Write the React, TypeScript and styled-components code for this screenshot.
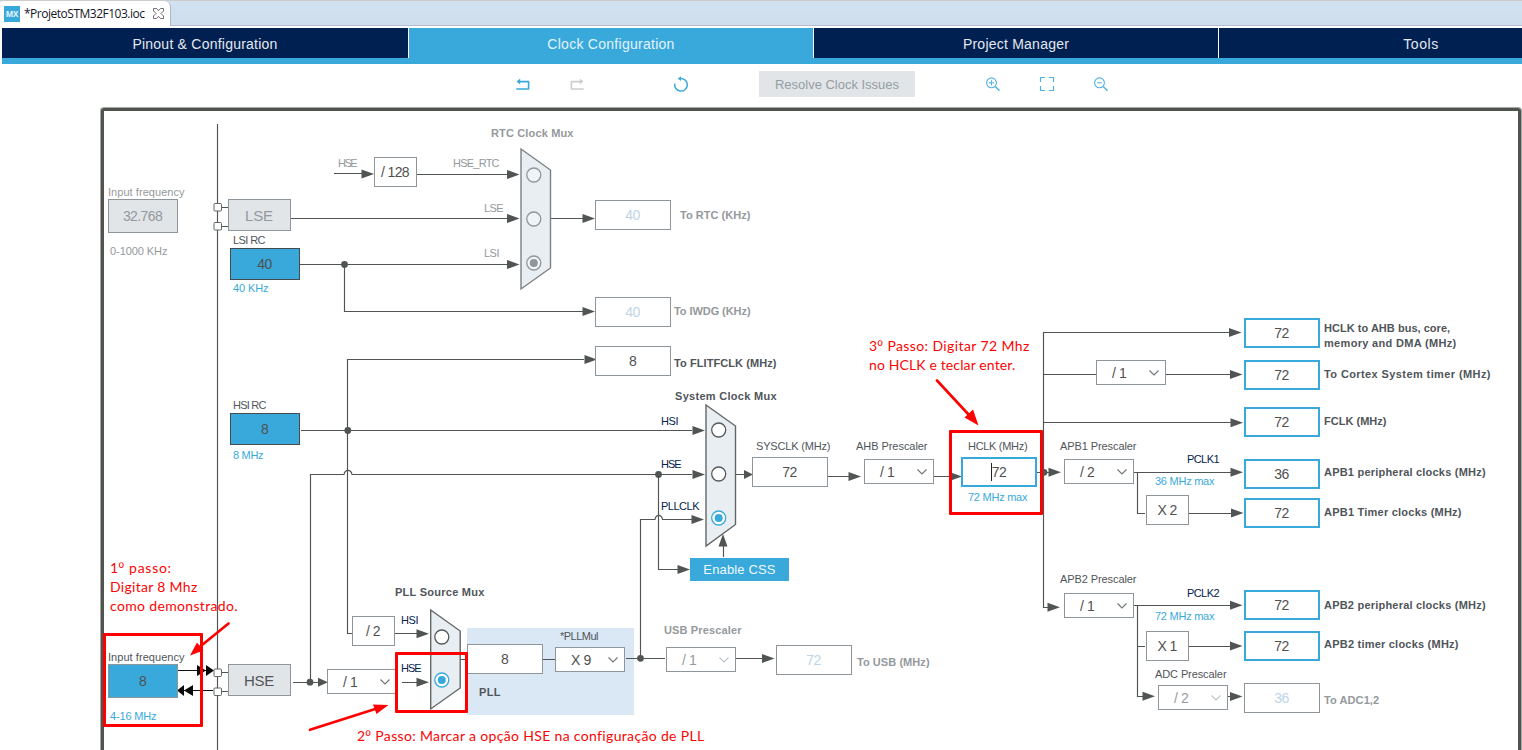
import React from "react";
import styled, { createGlobalStyle } from "styled-components";

const SANS = '"Liberation Sans", Arial, sans-serif';
const NOTE = 'Lato, Calibri, sans-serif';
const BLUE = "#39a9dc";
const NAVY = "#03234b";
const INK = "#50555a";
const MUTED = "#8f969b";
const WIRE = "#505554";

const GlobalStyle = createGlobalStyle`
  html, body { margin: 0; padding: 0; background: #fff; overflow: hidden; }
  * { box-sizing: border-box; }
`;

const Page = styled.div`
  display: flex;
  flex-direction: column;
  width: 1522px;
  height: 750px;
  overflow: hidden;
  background: #fff;
  font-family: ${SANS};
`;

/* ---------- editor tab strip ---------- */

const TabStrip = styled.div`
  display: flex;
  flex: none;
  height: 26px;
  background: linear-gradient(#d2e1f0, #cfdeed);
  border-top: 1px solid #cbcbcb;
  border-bottom: 1px solid #b5bccf;
`;

const EditorTab = styled.div`
  display: flex;
  align-items: center;
  width: 171px;
  height: 25px;
  padding-left: 4px;
  background: #fff;
  border-right: 1px solid #b0b5cf;
  border-radius: 3px 6px 0 0;
`;

const MxBadge = styled.div`
  width: 16px;
  height: 16px;
  background: ${BLUE};
  color: #e8f6fd;
  font: 700 8px/15px "Open Sans", sans-serif;
  letter-spacing: -0.2px;
  text-align: center;
`;

const FileName = styled.div`
  width: 133px;
  padding-left: 4px;
  color: #15151f;
  font: 12px/16px "Open Sans", "Noto Sans", sans-serif;
  white-space: nowrap;
`;

/* ---------- main navigation ---------- */

const Nav = styled.nav`
  display: flex;
  flex: none;
  gap: 1px;
  height: 36px;
  margin: 2px 0 0 2px;
  background: #fff;
  border-bottom: 6px solid ${BLUE};
  overflow: hidden;
`;

const NavItem = styled.div<{ $active?: boolean; $width: number }>`
  flex: 0 0 ${(p) => p.$width}px;
  height: 30px;
  background: ${(p) => (p.$active ? BLUE : "#002052")};
  color: ${(p) => (p.$active ? "#e3f3fb" : "#e4e8ee")};
  font-size: 14px;
  line-height: 32px;
  text-align: center;
`;

/* ---------- toolbar ---------- */

const Toolbar = styled.div`
  display: flex;
  flex: none;
  align-items: center;
  height: 43px;
  padding: 0 0 3px 515px;
`;

const HistoryTools = styled.div`
  display: flex;
  gap: 38px;
  margin-right: 88px;
`;

const ZoomTools = styled.div`
  display: flex;
  gap: 38px;
  margin-left: 70px;
`;

const IconButton = styled.div`
  display: flex;
  flex: none;
  width: 16px;
  height: 16px;
`;

const ResolveButton = styled.div`
  flex: none;
  width: 156px;
  height: 26px;
  margin-left: 70px;
  background: #e1e5e8;
  color: #969da3;
  font-size: 13px;
  line-height: 27px;
  text-align: center;
`;

/* ---------- diagram canvas ---------- */

const ORIGIN = { x: 104, y: 111 };

const Canvas = styled.div`
  position: relative;
  flex: none;
  width: 1420px;
  height: 660px;
  margin-left: 101px;
  margin-top: 1px;
  border: 3px solid #50544f;
  border-radius: 3px 3px 0 0;
  box-shadow: 0 0 0 1px #a3a7a6;
`;

const Layer = styled.svg`
  position: absolute;
  left: 0;
  top: 0;
  display: block;
  pointer-events: none;
`;

const Placed = styled.div<{ $x: number; $y: number; $w?: number; $h?: number }>`
  position: absolute;
  left: ${(p) => p.$x - ORIGIN.x}px;
  top: ${(p) => p.$y - ORIGIN.y}px;
  ${(p) => p.$w !== undefined && `width: ${p.$w}px;`}
  ${(p) => p.$h !== undefined && `height: ${p.$h}px;`}
`;

type Tone = "dark" | "muted" | "pale" | "blue" | "navy" | "note";
const toneColor: Record<Tone, string> = {
  dark: INK,
  muted: "#94999c",
  pale: "#bdd5e7",
  blue: BLUE,
  navy: NAVY,
  note: "#fb0404",
};

const LabelText = styled(Placed)<{ $tone: Tone; $bold?: boolean; $note?: boolean }>`
  color: ${(p) => toneColor[p.$tone]};
  font-family: ${(p) => (p.$note ? NOTE : SANS)};
  font-size: ${(p) => (p.$note ? 14 : 11)}px;
  font-weight: ${(p) => (p.$bold ? 700 : 400)};
  line-height: 16px;
  white-space: pre;
`;

/* Masculine ordinal with the underlined o. */
const Ordinal = styled.span`
  display: inline-block;
  height: 9px;
  border-bottom: 1px solid currentColor;
  line-height: 16px;
  vertical-align: 4px;
  letter-spacing: 0;
  font-size: 13px;
  & > span { position: relative; top: -1px; }
`;

const pen = document.createElement("canvas").getContext("2d");

/* Letter spacing that spreads a text over a given width. */
function tracking(text: string, font: string, width: number) {
  if (!pen) return 0;
  pen.font = font;
  return (width - pen.measureText(text).width) / Math.max(1, text.length - 1);
}

type LabelProps = { t: string; x: number; to: number; y: number; tone?: Tone; bold?: boolean };

function Label({ t, x, to, y, tone = "dark", bold }: LabelProps) {
  const note = tone === "note";
  const font = `${bold ? 700 : 400} ${note ? 14 : 11}px ${note ? NOTE : SANS}`;
  const [head, tail] = t.split("º");
  return (
    <LabelText
      $x={x}
      $y={y - 8}
      $tone={tone}
      $bold={bold}
      $note={note}
      style={{ letterSpacing: `${tracking(t, font, to - x + 0.5).toFixed(2)}px` }}
    >
      {tail === undefined ? t : <>{head}<OrdinalMark />{tail}</>}
    </LabelText>
  );
}

const OrdinalFont = styled.span`
  font-family: ${SANS};
  letter-spacing: 0.8px;
`;

function OrdinalMark() {
  return <OrdinalFont>º</OrdinalFont>;
}

const ValueBox = styled(Placed)<{ $kind: "plain" | "pale" | "live" | "source" | "input" | "off" }>`
  border: ${(p) => (p.$kind === "live" ? `2px solid ${BLUE}` : `1px solid ${p.$kind === "source" ? "#464b4f" : MUTED}`)};
  background: ${(p) =>
    p.$kind === "off" ? "#e1e5e8" : p.$kind === "source" || p.$kind === "input" ? BLUE : "#fff"};
  color: ${(p) => (p.$kind === "pale" ? "#bdd5e7" : p.$kind === "off" ? "#93999e" : "#50504f")};
  display: flex;
  align-items: center;
  justify-content: center;
  padding-right: 1px;
  font-size: 14px;
  letter-spacing: -0.6px;
  white-space: pre;
`;

const Oscillator = styled(ValueBox)<{ $dim?: boolean }>`
  font-size: 15px;
  letter-spacing: -0.2px;
  color: ${(p) => (p.$dim ? "#93999e" : "#50555a")};
`;

const Combo = styled(Placed)<{ $dim?: boolean }>`
  display: flex;
  align-items: center;
  justify-content: space-between;
  padding: 0 5px 0 15px;
  border: 1px solid ${MUTED};
  background: #fff;
  color: ${(p) => (p.$dim ? "#969b9e" : "#50504f")};
  font-size: 14px;
  letter-spacing: -0.4px;
  white-space: pre;
`;

const PllPanel = styled(Placed)`
  background: #dae8f6;
`;

const CssButton = styled(Placed)`
  background: ${BLUE};
  color: #eef8fd;
  font-size: 13px;
  line-height: 24px;
  letter-spacing: 0.15px;
  text-align: center;
`;

const Caret = styled.span`
  width: 1px;
  height: 18px;
  background: #222;
`;

const Highlight = styled(Placed)`
  border: 3px solid #fe0000;
  border-radius: 1px;
`;

function Select({ x, y, t, dim }: { x: number; y: number; t: string; dim?: boolean }) {
  return (
    <Combo $x={x} $y={y} $w={70} $h={25} $dim={dim}>
      {t}
      <svg width="12" height="8" viewBox="0 0 12 8">
        <path d="M1.5 1.5 6 6l4.500-4.500" fill="none" stroke={dim ? "#bfc3c5" : "#6f7477"} strokeWidth="1.100" />
      </svg>
    </Combo>
  );
}

function Wire({ d, color = WIRE }: { d: string; color?: string }) {
  return <path d={d} fill="none" stroke={color} strokeWidth="1.150" />;
}

/* Arrow head with its tip at (x, y), pointing right. */
function Head({ x, y }: { x: number; y: number }) {
  return <path d={`M${x} ${y}l-12.500-4.500v9z`} fill={WIRE} />;
}

function Mux({ x, top, mid1, mid2, bottom, dim }: { x: number; top: number; mid1: number; mid2: number; bottom: number; dim?: boolean }) {
  return (
    <path
      d={`M${x} ${top}L${x + 29.5} ${mid1}V${mid2}L${x} ${bottom}Z`}
      fill="#e9eef2"
      stroke={dim ? "#7b8184" : "#62676a"}
      strokeWidth="1.400"
    />
  );
}

function Radio({ x, y, on, dim }: { x: number; y: number; on?: boolean; dim?: boolean }) {
  const c = dim ? "#8f969b" : on ? BLUE : "#55595b";
  return (
    <g>
      <circle cx={x} cy={y} r="7" fill={dim ? "#f1f4f6" : "#fff"} stroke={c} strokeWidth="1.300" />
      {on && <circle cx={x} cy={y} r="4" fill={c} />}
    </g>
  );
}

const wires = [
  "M217.500 124V750",
  "M221 207.500H228M221 226.500H228M221 672.500H228M221 691.500H228",
  "M334 173.500H364M417 174.500H508M291 218.500H508M300 264.500H508",
  "M344.500 264.500V311.500H584M550 218.500H584",
  "M584 359.500H347.500V633.500H352M301 430.500H692",
  "M310.500 682V474.500H344C345 469 351 469 352 474.500H692",
  "M395 633.500H417M402 682.500H417M293 682.500H320",
  "M460 659.500H467M543 659.500H555M626 658.500H665M736 658.500H764",
  "M640.500 658.500V519.500H655C656 514 661.500 514 662.500 519.500H692",
  "M658.500 474.500V569.500H679M723.500 557V546",
  "M736 474.500H745M828 476.500H850M934 476.500H950M1037 472.500H1049",
  "M1229 332.500H1043.500V607.500H1048M1043.500 374.500H1096M1166 374.500H1230M1043.500 422.500H1231",
  "M1134 472.500H1231M1137.500 472.500V513.500H1145M1189 513.500H1231",
  "M1134 605.500H1231M1137.500 605.500V696.500H1143M1137.500 646.500H1145M1189 646.500H1231M1228 696.500H1231",
];

const heads: [number, number][] = [
  [374, 174], [519.5, 174.5], [519.5, 218.5], [519.5, 264.5], [595, 218.5], [595, 311.5], [597, 359.500],
  [705, 430.500], [705, 474.500], [704, 519.500], [690, 569.500], [429, 633.700], [429, 682.300],
  [774.500, 658.500], [861, 476.500], [962, 476.500], [1061, 472.300], [1241.500, 332.500],
  [1242.500, 374.500], [1243, 422.700], [1243, 472.300], [1243.500, 513], [1242.500, 605.300], [1242.500, 646],
  [1242.500, 696.500], [1060, 607.300], [1155, 696.300],
];

const dots: [number, number][] = [
  [344.500, 264.500], [347.800, 430.500], [310, 682.200], [658.500, 474.500], [640.500, 658.300], [1044, 472.300],
];

const labels: LabelProps[] = [
  { t: "HSE", x: 338, to: 357, y: 163, tone: "muted" },
  { t: "Input frequency", x: 108, to: 184, y: 192, tone: "muted" },
  { t: "0-1000 KHz", x: 110, to: 167, y: 251, tone: "muted" },
  { t: "LSI RC", x: 233, to: 265, y: 240 },
  { t: "40 KHz", x: 233, to: 268, y: 288, tone: "blue" },
  { t: "RTC Clock Mux", x: 491, to: 573, y: 133, tone: "muted", bold: true },
  { t: "HSE_RTC", x: 453, to: 499, y: 163, tone: "muted" },
  { t: "LSE", x: 484, to: 503, y: 208, tone: "muted" },
  { t: "LSI", x: 484, to: 499, y: 253, tone: "muted" },
  { t: "To RTC (KHz)", x: 680, to: 750, y: 215, tone: "muted", bold: true },
  { t: "To IWDG (KHz)", x: 674, to: 750, y: 311, tone: "muted", bold: true },
  { t: "To FLITFCLK (MHz)", x: 674, to: 776, y: 363, bold: true },
  { t: "HSI RC", x: 233, to: 266, y: 405 },
  { t: "8 MHz", x: 233, to: 263, y: 455, tone: "blue" },
  { t: "System Clock Mux", x: 675, to: 776, y: 396, bold: true },
  { t: "HSI", x: 661, to: 678, y: 421, tone: "navy" },
  { t: "HSE", x: 661, to: 681, y: 464, tone: "navy" },
  { t: "PLLCLK", x: 661, to: 699, y: 506, tone: "navy" },
  { t: "SYSCLK (MHz)", x: 756, to: 830, y: 446 },
  { t: "AHB Prescaler", x: 856, to: 927, y: 446 },
  { t: "HCLK (MHz)", x: 968, to: 1027, y: 446 },
  { t: "72 MHz max", x: 968, to: 1027, y: 497, tone: "blue" },
  { t: "APB1 Prescaler", x: 1060, to: 1136, y: 446 },
  { t: "PCLK1", x: 1187, to: 1219, y: 459, tone: "navy" },
  { t: "36 MHz max", x: 1155, to: 1214, y: 481, tone: "blue" },
  { t: "APB2 Prescaler", x: 1060, to: 1136, y: 579 },
  { t: "PCLK2", x: 1187, to: 1219, y: 593, tone: "navy" },
  { t: "72 MHz max", x: 1155, to: 1214, y: 616, tone: "blue" },
  { t: "ADC Prescaler", x: 1155, to: 1226, y: 674 },
  { t: "HCLK to AHB bus, core,", x: 1324, to: 1450, y: 328, bold: true },
  { t: "memory and DMA (MHz)", x: 1324, to: 1456, y: 343, bold: true },
  { t: "To Cortex System timer (MHz)", x: 1324, to: 1490, y: 374, bold: true },
  { t: "FCLK (MHz)", x: 1324, to: 1386, y: 421, bold: true },
  { t: "APB1 peripheral clocks (MHz)", x: 1324, to: 1485, y: 472, bold: true },
  { t: "APB1 Timer clocks (MHz)", x: 1324, to: 1461, y: 512, bold: true },
  { t: "APB2 peripheral clocks (MHz)", x: 1324, to: 1485, y: 605, bold: true },
  { t: "APB2 timer clocks (MHz)", x: 1324, to: 1458, y: 644, bold: true },
  { t: "To ADC1,2", x: 1324, to: 1379, y: 700, tone: "muted", bold: true },
  { t: "PLL Source Mux", x: 395, to: 484, y: 592, bold: true },
  { t: "HSI", x: 401, to: 418, y: 620, tone: "navy" },
  { t: "HSE", x: 401, to: 421, y: 668, tone: "navy" },
  { t: "*PLLMul", x: 560, to: 598, y: 636 },
  { t: "PLL", x: 479, to: 500, y: 692, bold: true },
  { t: "USB Prescaler", x: 664, to: 741, y: 630, tone: "muted", bold: true },
  { t: "To USB (MHz)", x: 857, to: 929, y: 662, tone: "muted", bold: true },
  { t: "Input frequency", x: 108, to: 184, y: 657 },
  { t: "4-16 MHz", x: 110, to: 156, y: 716, tone: "blue" },
];

const notes: LabelProps[] = [
  { t: "1º passo:", x: 110, to: 171, y: 568 },
  { t: "Digitar 8 Mhz", x: 110, to: 197, y: 587 },
  { t: "como demonstrado.", x: 110, to: 237, y: 606 },
  { t: "3º Passo: Digitar 72 Mhz", x: 869, to: 1029, y: 346 },
  { t: "no HCLK e teclar enter.", x: 869, to: 1015, y: 365 },
  { t: "2º Passo: Marcar a opção HSE na configuração de PLL", x: 357, to: 704, y: 736 },
];

const VIEW = `${ORIGIN.x} ${ORIGIN.y} 1418 640`;

function Diagram() {
  return (
    <Canvas>
      <PllPanel $x={467} $y={628} $w={167} $h={87} />
      <Layer width="1418" height="640" viewBox={VIEW}>
        {wires.map((d) => <Wire key={d} d={d} />)}
        {heads.map(([x, y]) => <Head key={`${x} ${y}`} x={x} y={y} />)}
        <path d="M753 474.500l-9-4.500v9zM328 682.300l-10-4.500v9z" fill={WIRE} />
        <path d="M723 534l4.500 12.500h-9z" fill={WIRE} />
        {dots.map(([x, y]) => <circle key={`${x} ${y}`} cx={x} cy={y} r="3.400" fill={WIRE} />)}

        <Wire d="M178 670.500H213M178 690.500H213" color="#111" />
        <path d="M197 665l9 5.500-9 5.500zM206 665l8 5.500-8 5.500zM193 685l-9 5.500 9 5.500zM184 685l-7 5.500 7 5.500z" fill="#0a0a0a" />
        {[207, 226, 672.5, 691.5].map((y) => (
          <rect key={y} x="214" y={y - 3.5} width="7.500" height="7.500" rx="1" fill="#fff" stroke="#606568" />
        ))}

        <Mux x={521} top={149} mid1={170} mid2={268} bottom={289} dim />
        <Radio x={533.8} y={175} dim />
        <Radio x={533.8} y={219} dim />
        <Radio x={533.8} y={263} dim on />
        <Mux x={706} top={405} mid1={426} mid2={524.5} bottom={546} />
        <Radio x={718.7} y={430} />
        <Radio x={718.7} y={474} />
        <Radio x={718.7} y={518} on />
        <Mux x={430.7} top={610} mid1={631} mid2={688} bottom={709} />
        <Radio x={441.8} y={637} />
        <Radio x={441.8} y={680} on />
      </Layer>

      <ValueBox $kind="off" $x={108} $y={199} $w={70} $h={34}>32.768</ValueBox>
      <Oscillator $kind="off" $dim $x={228} $y={199} $w={63} $h={32}>LSE</Oscillator>
      <ValueBox $kind="source" $x={230} $y={248} $w={70} $h={32}>40</ValueBox>
      <ValueBox $kind="source" $x={230} $y={413} $w={70} $h={32}>8</ValueBox>
      <ValueBox $kind="input" $x={108} $y={664} $w={70} $h={34}>8</ValueBox>
      <Oscillator $kind="off" $x={228} $y={664} $w={63} $h={32}>HSE</Oscillator>

      <ValueBox $kind="plain" $x={374} $y={157} $w={43} $h={30}>/ 128</ValueBox>
      <ValueBox $kind="pale" $x={595} $y={200} $w={76} $h={30}>40</ValueBox>
      <ValueBox $kind="pale" $x={595} $y={297} $w={76} $h={30}>40</ValueBox>
      <ValueBox $kind="plain" $x={595} $y={346} $w={76} $h={30}>8</ValueBox>
      <ValueBox $kind="plain" $x={352} $y={616} $w={43} $h={30}>/ 2</ValueBox>
      <ValueBox $kind="plain" $x={467} $y={644} $w={76} $h={30}>8</ValueBox>
      <ValueBox $kind="pale" $x={776} $y={645} $w={76} $h={30}>72</ValueBox>
      <ValueBox $kind="plain" $x={752} $y={457} $w={76} $h={30}>72</ValueBox>
      <ValueBox $kind="live" $x={961} $y={457} $w={76} $h={30}><Caret />72</ValueBox>
      <ValueBox $kind="plain" $x={1146} $y={495} $w={43} $h={30}>X 2</ValueBox>
      <ValueBox $kind="plain" $x={1146} $y={631} $w={43} $h={30}>X 1</ValueBox>

      <ValueBox $kind="live" $x={1244} $y={318} $w={76} $h={30}>72</ValueBox>
      <ValueBox $kind="live" $x={1244} $y={360} $w={76} $h={30}>72</ValueBox>
      <ValueBox $kind="live" $x={1244} $y={407} $w={76} $h={30}>72</ValueBox>
      <ValueBox $kind="live" $x={1244} $y={459} $w={76} $h={30}>36</ValueBox>
      <ValueBox $kind="live" $x={1244} $y={498} $w={76} $h={30}>72</ValueBox>
      <ValueBox $kind="live" $x={1244} $y={590} $w={76} $h={30}>72</ValueBox>
      <ValueBox $kind="live" $x={1244} $y={631} $w={76} $h={30}>72</ValueBox>
      <ValueBox $kind="pale" $x={1244} $y={683} $w={76} $h={30}>36</ValueBox>

      <Select x={327} y={669} t="/ 1" />
      <Select x={555} y={647} t="X 9" />
      <Select x={666} y={647} t="/ 1" dim />
      <Select x={864} y={459} t="/ 1" />
      <Select x={1064} y={459} t="/ 2" />
      <Select x={1096} y={360} t="/ 1" />
      <Select x={1064} y={593} t="/ 1" />
      <Select x={1158} y={685} t="/ 2" dim />

      <CssButton $x={690} $y={558} $w={99} $h={23}>Enable CSS</CssButton>

      {labels.map((l) => <Label key={`${l.x} ${l.y}`} {...l} />)}

      <Highlight $x={103} $y={633} $w={100} $h={94} />
      <Highlight $x={395} $y={652} $w={73} $h={61} />
      <Highlight $x={949} $y={430} $w={94} $h={85} />
      {notes.map((l) => <Label key={`${l.x} ${l.y}`} {...l} tone="note" />)}
      <Layer width="1418" height="640" viewBox={VIEW}>
        <g stroke="#fe0000" strokeWidth="2.600" strokeLinecap="round" fill="#fe0000">
          <path d="M228.500 623.500L199 647.500M310 729.800L376 708.800M937 380.500L969 415" />
          <path stroke="none" d="M190 655.500L197 642.500L203.500 650.500ZM388.500 705L373 704.500L376.500 714ZM978.500 425.500L964.500 417.500L973 409.500Z" />
        </g>
      </Layer>
    </Canvas>
  );
}

function UndoIcon({ flip }: { flip?: boolean }) {
  const c = flip ? "#cbcdcf" : BLUE;
  return (
    <svg width="16" height="16" viewBox="0 0 16 16" fill="none" stroke={c} strokeWidth="1.600" strokeLinejoin="round">
      <g transform={flip ? "translate(16 0) scale(-1 1)" : undefined}>
        <path d="M4 5.600H13.600V13H1.300" />
        <path d="M5.200 2.600V8.600L1.600 5.600Z" fill={c} stroke="none" />
      </g>
    </svg>
  );
}

function LensIcon({ plus }: { plus?: boolean }) {
  return (
    <svg width="16" height="16" viewBox="0 0 16 16" fill="none" stroke="#4fb2df" strokeWidth="1.100">
      <circle cx="6.500" cy="6.800" r="4.900" />
      <path d="M10.200 10.500 14.500 14.800" strokeWidth="1.400" />
      <path d={plus ? "M4 6.800H9M6.500 4.300V9.300" : "M4.300 6.800H8.700"} />
    </svg>
  );
}

export default function App() {
  return (
    <Page>
      <GlobalStyle />
      <TabStrip>
        <EditorTab>
          <MxBadge>MX</MxBadge>
          <FileName style={{ letterSpacing: `${tracking("*ProjetoSTM32F103.ioc", '12px "Open Sans"', 121).toFixed(2)}px` }}>
            *ProjetoSTM32F103.ioc
          </FileName>
          <svg width="11" height="11" viewBox="0 0 11 11" fill="#fff" stroke="#6d6d72" strokeWidth="1">
            <path d="M.5.500h3l2 2.200 2-2.200h3v2.500L8 5.500l2.500 2.500v2.500h-3l-2-2.200-2 2.200h-3V8L3 5.500.5 3z" />
          </svg>
        </EditorTab>
      </TabStrip>
      <Nav>
        {[["Pinout & Configuration", 406], ["Clock Configuration", 404], ["Project Manager", 404], ["Tools", 404]].map(([t, w], i) => (
          <NavItem key={t} $width={w as number} $active={i === 1}>
            <span style={{ letterSpacing: `${tracking(t as string, `14px ${SANS}`, [145, 127, 106, 35][i]).toFixed(2)}px` }}>{t}</span>
          </NavItem>
        ))}
      </Nav>
      <Toolbar>
        <HistoryTools>
          <IconButton><UndoIcon /></IconButton>
          <IconButton><UndoIcon flip /></IconButton>
        </HistoryTools>
        <IconButton>
          <svg width="16" height="16" viewBox="0 0 16 16" fill="none" stroke={BLUE} strokeWidth="1.500">
            <path d="M1.800 7.600A6.300 6.300 0 1 0 8.200 2.500H6.500" />
            <path d="M8 .200V5L4.800 2.600Z" fill={BLUE} stroke="none" />
          </svg>
        </IconButton>
        <ResolveButton>
          <span style={{ letterSpacing: `${tracking("Resolve Clock Issues", `13px ${SANS}`, 124).toFixed(2)}px` }}>Resolve Clock Issues</span>
        </ResolveButton>
        <ZoomTools>
          <IconButton><LensIcon plus /></IconButton>
          <IconButton>
            <svg width="16" height="16" viewBox="0 0 16 16" fill="none" stroke="#4fb2df" strokeWidth="1.200">
              <path d="M1.500 6V1.500H6M10 1.500h4.500V6M14.500 10v4.500H10M6 14.500H1.500V10" />
            </svg>
          </IconButton>
          <IconButton><LensIcon /></IconButton>
        </ZoomTools>
      </Toolbar>
      <Diagram />
    </Page>
  );
}
